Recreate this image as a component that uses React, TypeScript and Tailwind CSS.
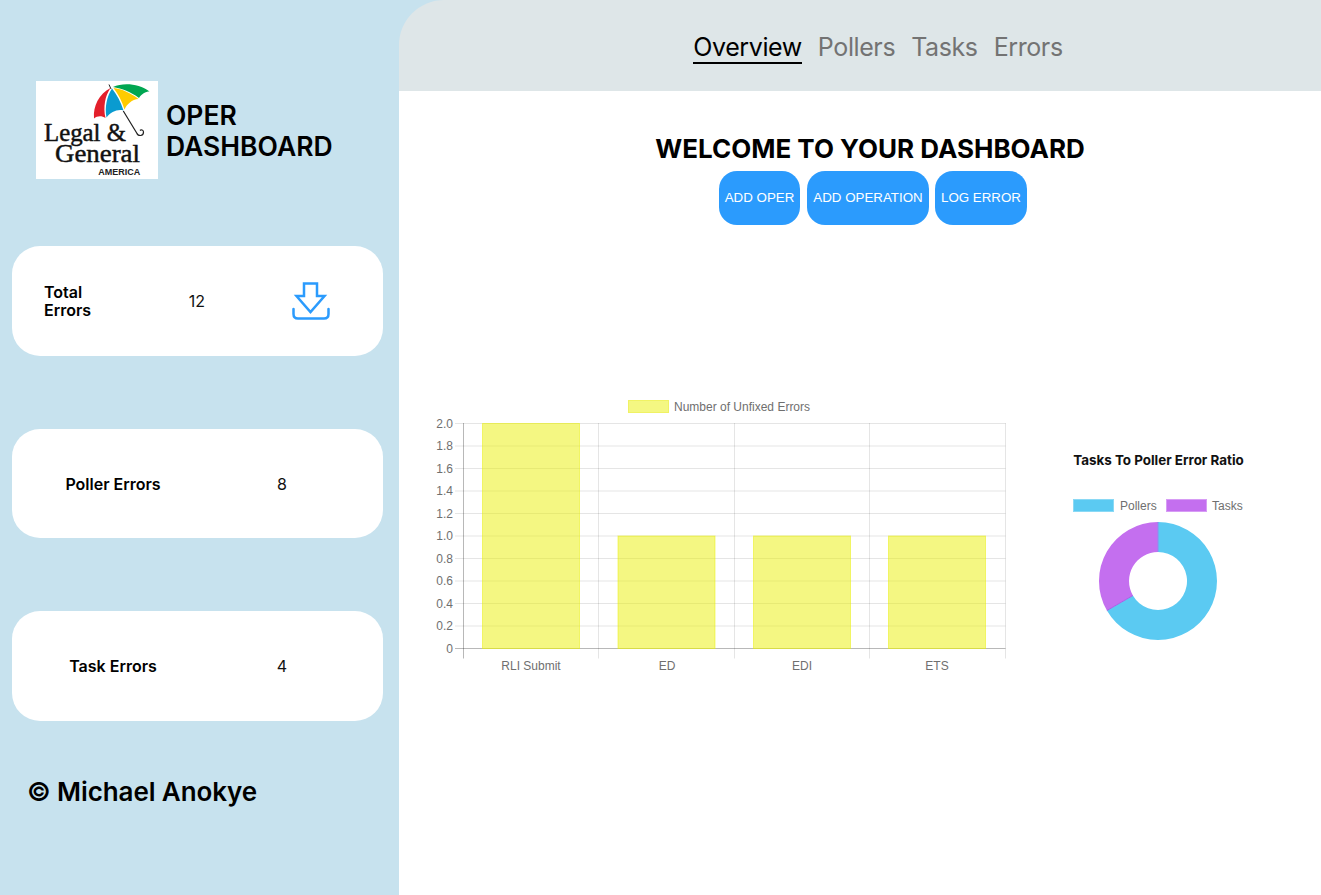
const ticks = ["2.0", "1.8", "1.6", "1.4", "1.2", "1.0", "0.8", "0.6", "0.4", "0.2", "0"];

const bars = [
  { label: "RLI Submit", x: 482.5, w: 97, center: 531, top: 423.5 },
  { label: "ED", x: 618, w: 97, center: 667, top: 536 },
  { label: "EDI", x: 753.5, w: 97, center: 802, top: 536 },
  { label: "ETS", x: 888.5, w: 97, center: 937, top: 536 },
];

const Logo = () => {
  return (
    <svg width="122" height="98" viewBox="0 0 122 98" className="bg-white shrink-0">
      <path d="M73 3.5 L75 8" stroke="#222" strokeWidth="1" />
      <path d="M58 37.5 C57 25 63 13 74.5 7 C69 15 67 26 69.5 37 C65.5 34.5 61 35 58 37.5 Z" fill="#e31f2b" />
      <path d="M70.5 36.5 C68.5 26 71 15 76 7.5 C81 14 85 21 87.5 29.5 C81 28 75 31 70.5 36.5 Z" fill="#0a9bd0" />
      <path d="M77.5 7 C86 8 95 12 102.5 18 C96 18.5 91 23 88.5 28.5 C86 20 82 13 77.5 7 Z" fill="#fecb00" />
      <path d="M77 6 C87 1.5 103 2.5 113.5 10.5 C109.5 10.5 105.5 13 103 17 C95 11 86 7.5 77 6 Z" fill="#00a651" />
      <path d="M87.3 30 L100.7 52 C102 55.5 107.5 55.5 107.5 51 C107.5 49 105 48.3 104 49.5" fill="none" stroke="#222" strokeWidth="1.2" />
      <text x="8" y="59.7" textLength="82" lengthAdjust="spacingAndGlyphs" fontSize="25" fill="#111" stroke="#111" strokeWidth="0.45" className="font-['Liberation_Serif',serif]">
        Legal &amp;
      </text>
      <text x="19" y="81" textLength="85" lengthAdjust="spacingAndGlyphs" fontSize="25" fill="#111" stroke="#111" strokeWidth="0.45" className="font-['Liberation_Serif',serif]">
        General
      </text>
      <text x="62.3" y="94" textLength="42" lengthAdjust="spacingAndGlyphs" fontSize="9" fontWeight="700" fill="#222" className="font-['Liberation_Sans',sans-serif]">
        AMERICA
      </text>
    </svg>
  );
};

const DownloadIcon = () => {
  return (
    <svg width="38" height="38" viewBox="0 0 38 38" fill="none" stroke="#2b9bfd" strokeWidth="2.5" className="ml-[64px]">
      <path d="M12 1.5 H25 V14 H32.5 L18.5 30 L4.5 14 H12 Z" strokeLinejoin="miter" />
      <path d="M1.5 27 V32 C1.5 35 3.5 36.5 6 36.5 H32 C34.5 36.5 36.5 35 36.5 32 V27" strokeLinecap="round" />
    </svg>
  );
};

const StatCard = ({ label, value, height }: { label: string; value: number; height: string }) => {
  return (
    <div className={`${height} rounded-[28px] bg-white grid grid-cols-[202px_136px] items-center text-center`}>
      <span className="text-base font-semibold text-black">{label}</span>
      <span className="text-base text-[#111]">{value}</span>
    </div>
  );
};

const Sidebar = () => {
  return (
    <aside className="w-[399px] shrink-0 pt-[81px] pl-3 pr-4">
      <div className="flex items-center gap-2 pl-6">
        <Logo />
        <h2 className="text-[26.5px] leading-[31px] font-semibold text-black mt-[2px]">
          OPER
          <br />
          DASHBOARD
        </h2>
      </div>
      <div className="mt-[67px] h-[110px] rounded-[28px] bg-white grid grid-cols-[154px_62px_1fr] items-center">
        <span className="pl-8 text-base leading-[18px] font-semibold text-black">
          Total
          <br />
          Errors
        </span>
        <span className="text-base text-center text-[#111]">12</span>
        <DownloadIcon />
      </div>
      <div className="mt-[73px]">
        <StatCard label="Poller Errors" value={8} height="h-[109px]" />
      </div>
      <div className="mt-[73px]">
        <StatCard label="Task Errors" value={4} height="h-[110px]" />
      </div>
      <p className="mt-[55px] pl-[15px] text-[26px] leading-8 font-semibold tracking-[-0.1px] text-black">© Michael Anokye</p>
    </aside>
  );
};

const BarChart = () => {
  return (
    <svg width="600" height="285" viewBox="420 395 600 285" className="shrink-0 font-['Liberation_Sans',sans-serif]">
      <rect x="628.5" y="400.5" width="40" height="12" fill="#f4f782" stroke="#f0f264" />
      <text x="674" y="411" fontSize="12" fill="#6f6f6f">
        Number of Unfixed Errors
      </text>
      {ticks.map((t, i) => {
        const y = 423.5 + i * 22.5;
        return (
          <g key={t}>
            <line x1="455" x2="1005.5" y1={y} y2={y} stroke={t === "0" ? "rgba(0,0,0,0.28)" : "rgba(0,0,0,0.1)"} />
            <text x="453" y={y + 4} fontSize="12" fill="#6f6f6f" textAnchor="end">
              {t}
            </text>
          </g>
        );
      })}
      {[463.5, 598.5, 734.5, 869.5, 1005.5].map((x, i) => (
        <line key={x} x1={x} x2={x} y1="423" y2="658.5" stroke={i === 0 ? "rgba(0,0,0,0.28)" : "rgba(0,0,0,0.1)"} />
      ))}
      {bars.map((b) => (
        <g key={b.label}>
          <rect x={b.x} y={b.top} width={b.w} height={648.5 - b.top} fill="rgba(233,239,5,0.5)" stroke="rgba(233,239,5,0.5)" />
          <text x={b.center} y="670" fontSize="12" fill="#6f6f6f" textAnchor="middle">
            {b.label}
          </text>
        </g>
      ))}
    </svg>
  );
};

const DoughnutChart = () => {
  return (
    <svg width="200" height="200" viewBox="1060 450 200 200" className="shrink-0 font-['Liberation_Sans',sans-serif]">
      <text x="1158.5" y="465" fontSize="13.4" fontWeight="700" fill="#111" textAnchor="middle" className="font-['Inter',sans-serif]">
        Tasks To Poller Error Ratio
      </text>
      <rect x="1073.5" y="499.5" width="40" height="12" fill="#5bcaf2" stroke="#8ad9f5" />
      <text x="1120" y="510" fontSize="12" fill="#6f6f6f">
        Pollers
      </text>
      <rect x="1166.5" y="499.5" width="40" height="12" fill="#c46fef" stroke="#d79cf5" />
      <text x="1212" y="510" fontSize="12" fill="#6f6f6f">
        Tasks
      </text>
      <path d="M1158 522 A59 59 0 1 1 1106.9 610.5 L1132.9 595.5 A29 29 0 1 0 1158 552 Z" fill="#5bcaf2" />
      <path d="M1158 522 A59 59 0 0 0 1106.9 610.5 L1132.9 595.5 A29 29 0 0 1 1158 552 Z" fill="#c46fef" />
      <line x1="1158" y1="522" x2="1158" y2="552" stroke="#8f8cf0" />
      <line x1="1106.9" y1="610.5" x2="1132.9" y2="595.5" stroke="#a95fe8" />
    </svg>
  );
};

const Main = () => {
  return (
    <main className="flex-1 flex flex-col min-w-0">
      <header className="h-[91px] bg-[#dee6e8] rounded-tl-[45px] flex items-start justify-center gap-4 pl-[36px] pt-[32px] text-[25px] leading-[30px] tracking-[-0.4px] text-[#737373]">
        <a className="text-black border-b-2 border-black">Overview</a>
        <a>Pollers</a>
        <a>Tasks</a>
        <a>Errors</a>
      </header>
      <section className="flex-1 bg-white flex flex-col">
        <h1 className="mt-[41px] pl-5 text-center text-[26px] leading-[34px] font-bold text-black">WELCOME TO YOUR DASHBOARD</h1>
        <div className="mt-[5px] pl-[26px] flex justify-center font-['Liberation_Sans',sans-serif]">
          <button className="h-[54px] w-[81px] rounded-[18px] bg-[#2b9bfd] text-[13.33px] text-white">ADD OPER</button>
          <button className="ml-[7px] h-[54px] w-[122px] rounded-[18px] bg-[#2b9bfd] text-[13.33px] text-white">ADD OPERATION</button>
          <button className="ml-[6px] h-[54px] w-[92px] rounded-[18px] bg-[#2b9bfd] text-[13.33px] text-white">LOG ERROR</button>
        </div>
        <div className="mt-[170px] pl-[21px] flex items-start gap-10">
          <BarChart />
          <div className="mt-[55px]">
            <DoughnutChart />
          </div>
        </div>
      </section>
    </main>
  );
};

export default function App() {
  return (
    <div className="flex min-h-[895px] bg-[#c7e2ee] font-['Inter',sans-serif]">
      <Sidebar />
      <Main />
    </div>
  );
}
